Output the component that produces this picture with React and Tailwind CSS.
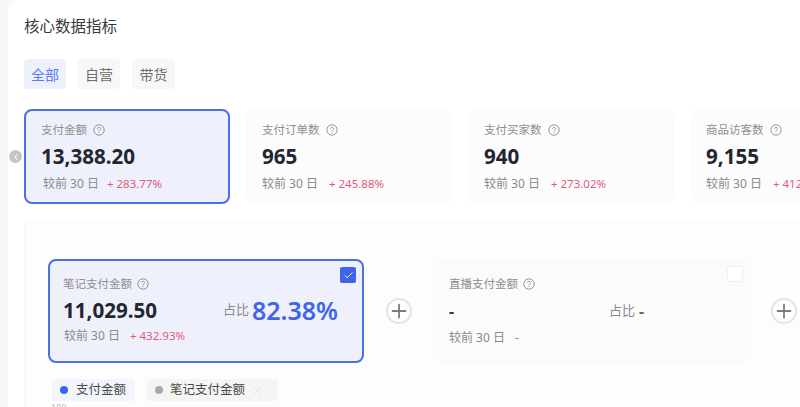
import { Check, Plus, X, ChevronLeft } from 'lucide-react'

const font = '"Noto Sans", "Noto Sans CJK SC", sans-serif'

function Help({ size = 12 }) {
  return (
    <svg width={size} height={size} viewBox="0 0 12 12" fill="none" stroke="#8a8a8a" strokeWidth="0.9" className="shrink-0">
      <circle cx="6" cy="6" r="5.2" />
      <path d="M4.5 4.8c0-.9.7-1.4 1.5-1.4s1.5.5 1.5 1.3c0 1.2-1.5 1.2-1.5 2.5" />
      <path d="M6 8.3v.8" />
    </svg>
  )
}

function MetricCard({ title, value, change, active }) {
  return (
    <div className={active
      ? 'w-[206px] h-[95px] shrink-0 rounded-lg border-2 border-[#4d6fe0] bg-[#eef0fc] pl-[15px] pt-[11px]'
      : 'w-[206px] h-[95px] shrink-0 rounded-lg border-2 border-[#fcfcfc] bg-[#fcfcfc] pl-[14px] pt-[11px]'}>
      <div className="flex items-center gap-[6px] text-[11.5px] leading-[16px] text-[#8f8f8f]">
        <span>{title}</span>
        <Help />
      </div>
      <div className="mt-[3px] text-[20.6px] leading-[30px] font-bold text-[#23262f]">{value}</div>
      <div className={active ? 'mt-[5px] flex items-center gap-[8px] leading-[16px]' : 'mt-[5px] flex items-center gap-[11px] leading-[16px]'}>
        <span className={active ? 'pl-[2px] text-[12px] text-[#8a8a8a]' : 'text-[12px] text-[#8a8a8a]'}>较前 30 日</span>
        <span className="text-[11.5px] text-[#e6587a]">+ {change}</span>
      </div>
    </div>
  )
}

function PlusButton({ className = '' }) {
  return (
    <div className={`w-[26px] h-[26px] shrink-0 flex items-center justify-center rounded-full border-2 border-[#e3e3e3] bg-white ${className}`}>
      <Plus size={24} strokeWidth={2} color="#7d7d7d" />
    </div>
  )
}

export default function App() {
  return (
    <div className="relative w-[800px] h-[407px] overflow-hidden bg-[#f7f8fa]" style={{ fontFamily: font }}>
      <div className="ml-2 h-[407px] rounded-tl-xl bg-white pl-4">
        <h2 className="pt-[14px] text-[15.5px] leading-[24px] font-normal text-[#3a3a3a]">核心数据指标</h2>

        <div className="mt-[21px] flex gap-3 text-[14px]">
          <div className="w-[42px] h-[30px] flex items-center justify-center rounded bg-[#edf0fd] text-[#5b7cf0]">全部</div>
          <div className="w-[42px] h-[30px] flex items-center justify-center rounded bg-[#f7f7f7] text-[#6e6e6e]">自营</div>
          <div className="w-[43px] h-[30px] flex items-center justify-center rounded bg-[#f7f7f7] text-[#6e6e6e]">带货</div>
        </div>

        <div className="mt-[20px] flex gap-[16px] w-[900px]">
          <MetricCard active title="支付金额" value="13,388.20" change="283.77%" />
          <MetricCard title="支付订单数" value="965" change="245.88%" />
          <MetricCard title="支付买家数" value="940" change="273.02%" />
          <MetricCard title="商品访客数" value="9,155" change="412.06%" />
        </div>

        <div className="mt-[16px] w-[800px] h-[200px] rounded-t-lg border border-[#f8f8f8] bg-[#fdfdfe] pl-[23px] pt-[38px]">
          <div className="flex items-center gap-[22px]">
            <div className="relative w-[316px] h-[104px] shrink-0 rounded-lg border-2 border-[#4d6fe0] bg-[#eef0fc] pl-[13px] pt-[15px]">
              <div className="absolute right-[6px] top-[6px] w-4 h-4 flex items-center justify-center rounded-[2px] bg-[#3f63ea]">
                <Check size={11} strokeWidth={2} color="#ffffff" />
              </div>
              <div className="flex items-center gap-[5px] text-[11.5px] leading-[16px] text-[#8f8f8f]">
                <span>笔记支付金额</span>
                <Help />
              </div>
              <div className="mt-[3px] flex items-center">
                <div className="w-[160px] text-[20.6px] leading-[30px] font-bold text-[#23262f]">11,029.50</div>
                <span className="text-[13px] text-[#8a8a8a]">占比</span>
                <span className="ml-[3px] text-[25px] leading-[30px] font-semibold text-[#3f63ea]">82.38%</span>
              </div>
              <div className="mt-[3px] flex items-center gap-[10px] leading-[16px]">
                <span className="pl-px text-[12px] text-[#8a8a8a]">较前 30 日</span>
                <span className="text-[11.5px] text-[#e6587a]">+ 432.93%</span>
              </div>
            </div>
            <PlusButton />
            <div className="relative w-[316px] h-[104px] shrink-0 rounded-lg bg-[#fbfbfb] pl-[15px] pt-[17px]">
              <div className="absolute right-[7px] top-[7px] w-4 h-4 rounded-[2px] border border-[#efefef] bg-white" />
              <div className="flex items-center gap-[5px] text-[11.5px] leading-[16px] text-[#8f8f8f]">
                <span>直播支付金额</span>
                <Help />
              </div>
              <div className="mt-[4px] flex items-center">
                <div className="w-[160px] text-[16px] leading-[30px] font-bold text-[#3a3a3a]">-</div>
                <span className="text-[13px] text-[#8a8a8a]">占比</span>
                <span className="ml-[4px] text-[16px] leading-[30px] font-bold text-[#6a6a6a]">-</span>
              </div>
              <div className="mt-[4px] flex items-center gap-[10px] text-[12px] leading-[16px] text-[#8a8a8a]">
                <span>较前 30 日</span>
                <span>-</span>
              </div>
            </div>
            <PlusButton className="-ml-[1px]" />
          </div>

          <div className="mt-[16px] ml-[4px] flex gap-3 text-[12.5px]">
            <div className="w-[83px] h-[22px] flex items-center rounded bg-[#f3f5fd] pl-2 text-[#4a4a4a]">
              <span className="w-2 h-2 rounded-full bg-[#3f63ea]" />
              <span className="ml-[8px]">支付金额</span>
            </div>
            <div className="w-[131px] h-[22px] flex items-center rounded bg-[#f5f5f5] pl-2 text-[#4a4a4a]">
              <span className="w-2 h-2 rounded-full bg-[#a8a8a8]" />
              <span className="ml-[7px]">笔记支付金额</span>
              <X size={11} color="#dcdcdc" className="ml-[7px]" />
            </div>
          </div>
          <div className="ml-[3px] mt-[2px] text-[9px] leading-[10px] text-[#bbbbbb]">100</div>
        </div>
      </div>

      <div className="absolute left-[9px] top-[150px] w-[13px] h-[13px] flex items-center justify-center rounded-full bg-[#c4c4c4]">
        <ChevronLeft size={10} strokeWidth={2.5} color="#ffffff" />
      </div>
    </div>
  )
}
